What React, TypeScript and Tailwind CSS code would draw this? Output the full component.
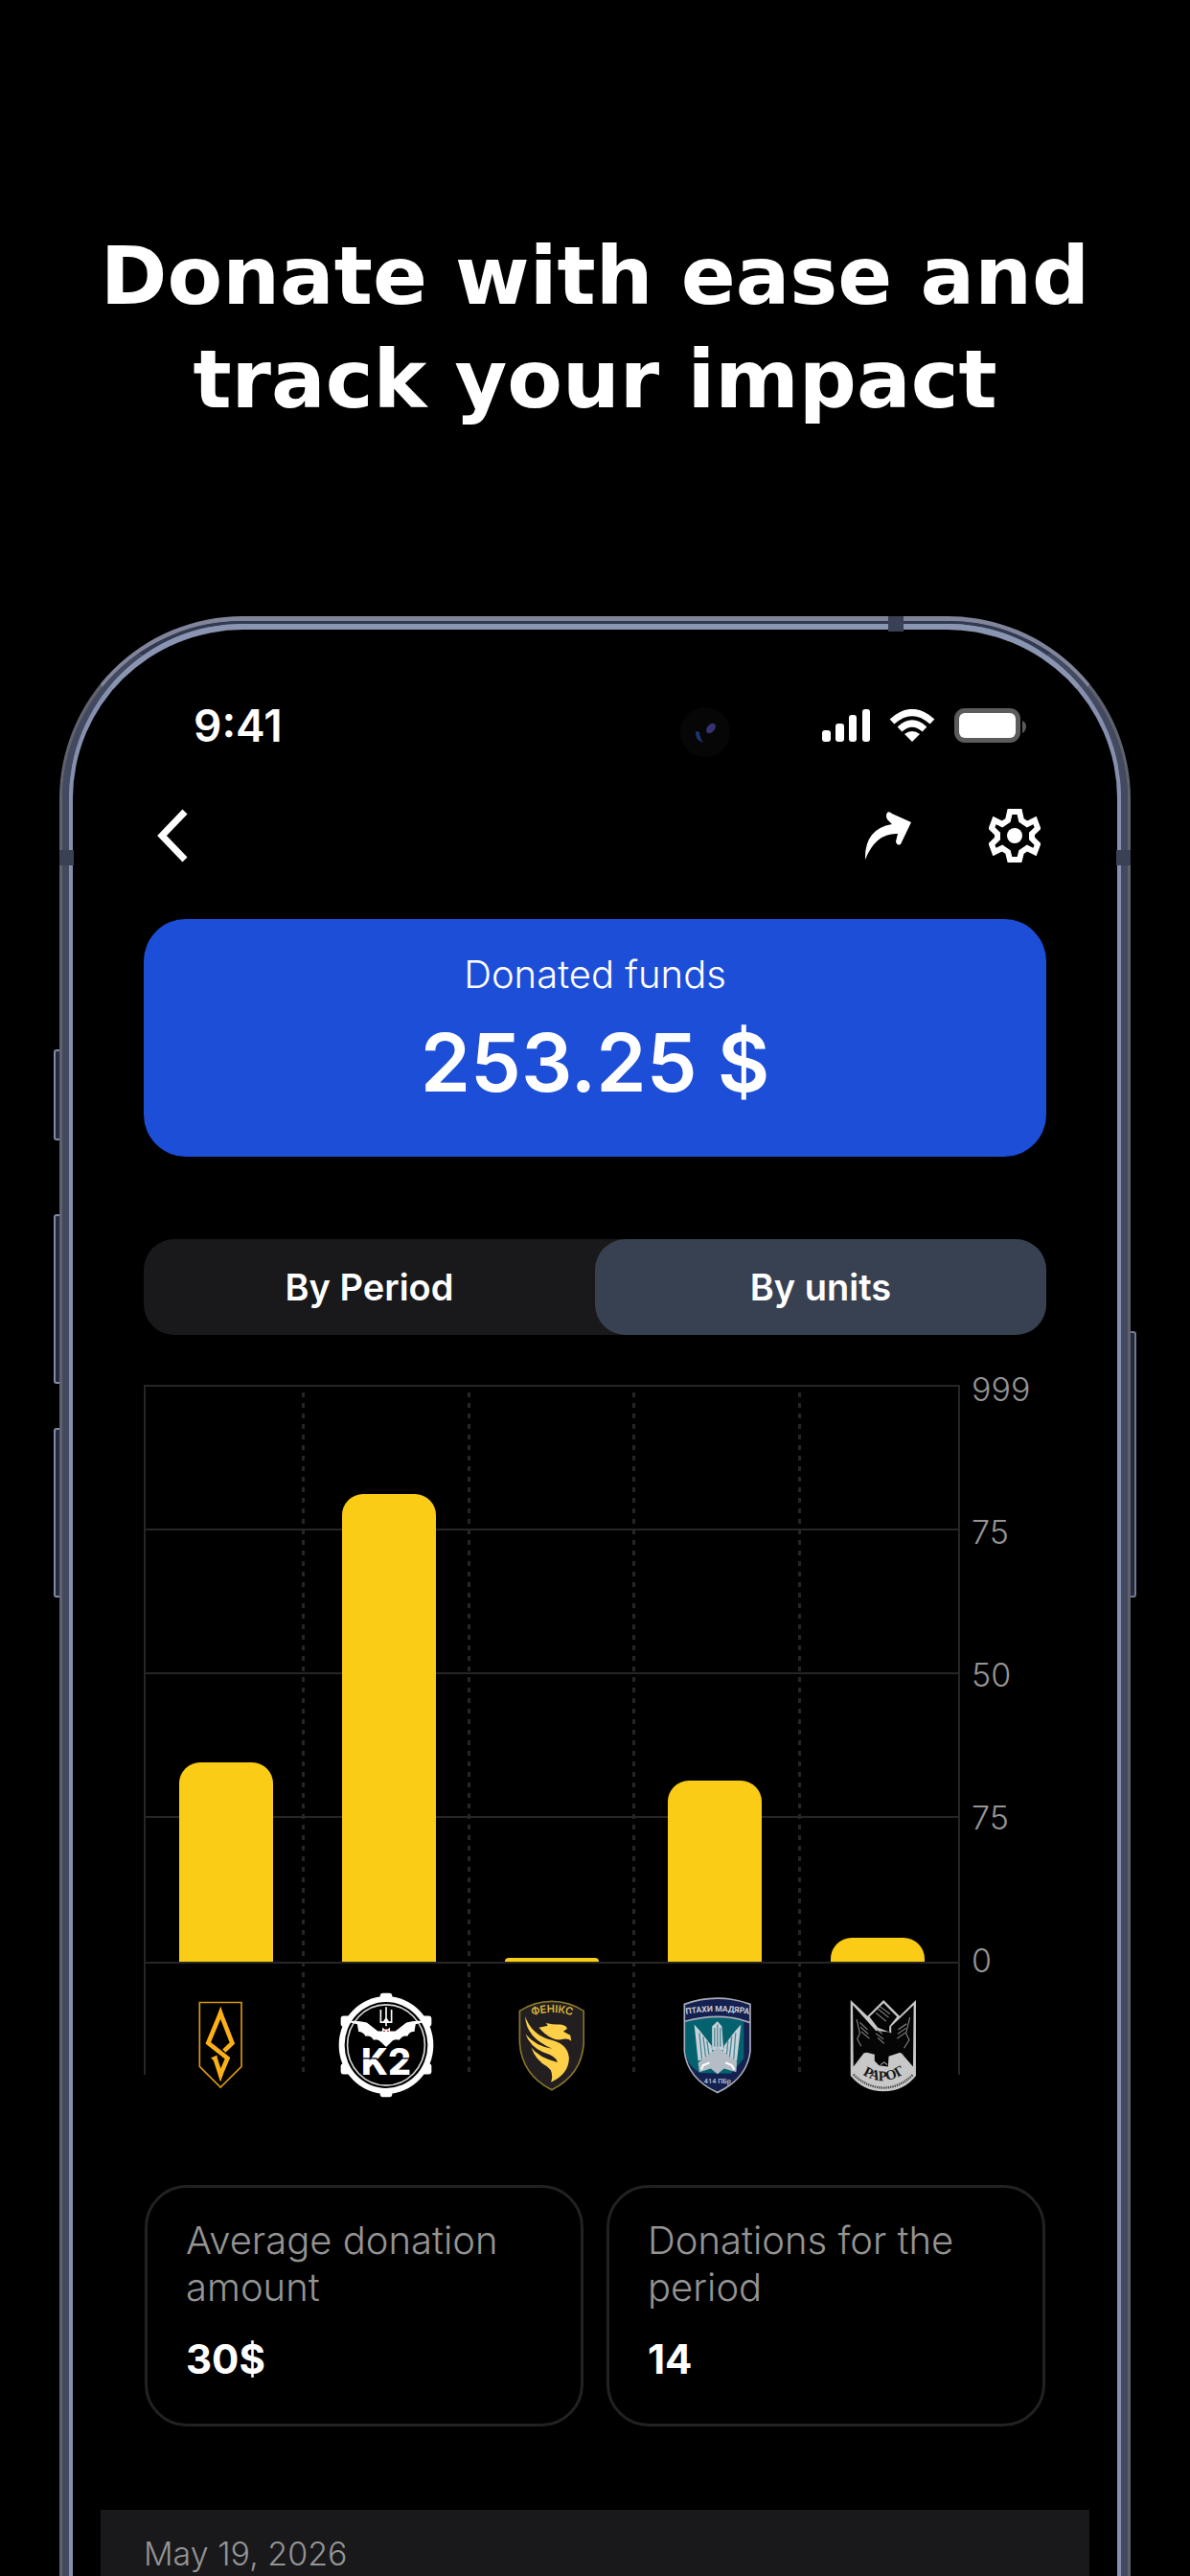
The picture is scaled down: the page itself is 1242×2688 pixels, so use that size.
import { useState } from "react";
import type { ReactNode } from "react";

type Tab = "period" | "units";

interface Unit {
  name: string;
  percent: number;
  logo: ReactNode;
}

const AzovLogo = () => (
  <svg viewBox="83 83 139 277" className="w-[46px] h-[92px]" fill="none" stroke="#fcb017">
    <path d="M87 87H219V289L153 355L87 289Z" strokeWidth="5" stroke="#d9960f" />
    <path
      d="M164 240L190 215L153 121L114 215L175 263L153 315L136 264"
      strokeWidth="14"
    />
    <path d="M153 99L162 128H144ZM153 338L145 312H161ZM122 262L142 253L144 280Z" fill="#fcb017" stroke="none" />
  </svg>
);

const K2Logo = () => (
  <svg viewBox="520 58 302 332" className="w-[100px] h-[110px]">
    <g fill="#fff">
      <rect x="652" y="60" width="38" height="30" rx="9" />
      <rect x="652" y="358" width="38" height="30" rx="9" />
      <rect x="528" y="132" width="32" height="34" rx="9" />
      <rect x="782" y="132" width="32" height="34" rx="9" />
      <rect x="528" y="282" width="32" height="34" rx="9" />
      <rect x="782" y="282" width="32" height="34" rx="9" />
      <ellipse cx="671" cy="224" rx="149" ry="154" />
    </g>
    <ellipse cx="671" cy="224" rx="131" ry="136" fill="#000" />
    <ellipse cx="671" cy="224" rx="122" ry="127" fill="none" stroke="#d8d8d8" strokeWidth="5" />
    <path
      d="M654 112V152H688V112M671 104V164M663 152L671 140L679 152"
      fill="none"
      stroke="#fff"
      strokeWidth="5"
    />
    <path
      d="M546 150Q575 144 610 153L645 180L659 180L659 168L666 174H676L683 168V180L700 180L735 153Q765 144 797 150L764 158L760 182Q745 180 738 196Q724 192 712 208Q694 204 686 216L671 230L656 216Q646 204 632 208Q622 192 606 196Q598 182 584 182L580 158Z"
      fill="#fff"
    />
    <path d="M662 180h6M674 180h6" stroke="#e0343c" strokeWidth="4" />
    <text
      x="671"
      y="317"
      textAnchor="middle"
      className="font-[Inter] font-extrabold"
      fontSize="114"
      fill="#fff"
    >
      K2
    </text>
    <path d="M590 266H640L656 282H688L704 266H752" fill="none" stroke="#000" strokeWidth="4" />
  </svg>
);

const PhoenixLogo = () => (
  <svg viewBox="186 82 206 284" className="w-[69px] h-[95px]">
    <path
      d="M190 116Q236 86 290 86Q344 86 390 116V215Q384 315 290 362Q196 315 190 215Z"
      fill="#231f20"
      stroke="#87752a"
      strokeWidth="5"
    />
    <path id="phoenix-arc" d="M216 134Q290 108 366 134" fill="none" />
    <text className="font-[Inter] font-semibold" fontSize="33" fill="#d8b53c">
      <textPath href="#phoenix-arc" startOffset="50%" textAnchor="middle">
        ФЕНІКС
      </textPath>
    </text>
    <g fill="#fdd048">
      <path d="M250 168L278 162L272 154Q300 160 318 158Q338 162 338 172L326 180L348 192L351 210Q340 200 326 204Q306 210 290 200Q270 192 250 168Z" />
      <path d="M207 133Q226 186 278 204Q340 216 344 262Q344 312 288 338Q298 306 276 290Q240 270 226 230Q250 262 308 276Q306 258 262 244Q222 226 208 188Q240 226 292 234Q210 200 207 133Z" />
    </g>
  </svg>
);

const BirdsLogo = () => (
  <svg viewBox="99 70 214 304" className="w-[71px] h-[101px]">
    <path
      d="M103 92Q154 73 207 73Q260 73 310 92V240Q300 325 207 370Q112 325 103 240Z"
      fill="#14204f"
    />
    <path d="M105 146Q160 130 207 132Q260 132 290 146V262L250 310L150 308Q108 280 105 236Z" fill="#04626f" />
    <path
      d="M103 92Q154 73 207 73Q260 73 310 92V240Q300 325 207 370Q112 325 103 240ZM104 146Q160 131 207 131Q260 131 310 150"
      fill="none"
      stroke="#a9acb8"
      strokeWidth="5"
    />
    <path id="birds-arc" d="M106 124Q207 106 308 124" fill="none" />
    <text className="font-[Roboto] font-bold" fontSize="26" fill="#c9cad2">
      <textPath href="#birds-arc" startOffset="50%" textAnchor="middle">
        ПТАХИ МАДЯРА
      </textPath>
    </text>
    <g fill="#c7d3da">
      <path d="M207 146L221 162L226 236H190V162Z" />
      <path d="M134 156L152 176L188 222L192 256L146 270Z" />
      <path d="M281 156L263 176L228 222L222 256L268 270Z" />
      <path d="M207 224L222 238L268 272L266 306L228 294L207 312L186 294L150 306L146 276L192 240Z" fill="#b4bcc6" />
    </g>
    <path
      d="M207 156V226M198 166V226M216 166V226M150 182L158 264M162 194L170 258M174 208L180 250M264 182L258 264M252 194L245 258M240 208L236 250"
      stroke="#4e8794"
      strokeWidth="4"
    />
    <path d="M156 298L162 284L182 276M260 298L252 284L232 276" fill="none" stroke="#fff" strokeWidth="6" />
    <text x="207" y="342" textAnchor="middle" className="font-[Roboto] font-bold" fontSize="22" fill="#a9b2c8">
      414 ПБр
    </text>
  </svg>
);

const RarogLogo = () => (
  <svg viewBox="618 80 212 296" className="w-[71px] h-[99px]">
    <path d="M623 86L676 136L726 86L776 136L827 86V322Q790 370 726 371Q662 370 623 322Z" fill="#c8c8c8" />
    <path d="M630 102L704 184L702 240L664 252L632 294Z" fill="#050505" />
    <path d="M820 102L750 168V240L782 252L818 294Z" fill="#050505" />
    <path d="M726 96L768 138L744 168V186L708 172L682 138Z" fill="#050505" />
    <path d="M690 196L704 182L744 186L760 196L782 248L742 262L740 294L712 290L698 276V256L668 248Z" fill="#050505" />
    <path
      d="M642 146L652 190L644 208L656 230M652 156L676 178M654 170L678 192M656 184L682 206M808 140L796 190L806 210L790 236M798 160L772 178M796 174L770 192M794 188L768 206M706 112L742 140M712 104L746 130M702 126L734 152M704 176L722 192M702 190L726 208M708 204L728 222"
      fill="none"
      stroke="#8f8f8f"
      strokeWidth="3"
    />
    <path d="M716 288L728 280L738 288" fill="none" stroke="#aaa" strokeWidth="3" />
    <path id="rarog-arc" d="M636 300Q726 378 818 294" fill="none" />
    <text className="font-['Liberation_Serif'] font-bold" fontSize="44" fill="#161616">
      <textPath href="#rarog-arc" startOffset="50%" textAnchor="middle">
        РАРОГ
      </textPath>
    </text>
    <path d="M632 318Q672 358 726 360Q780 358 818 318" fill="none" stroke="#444" strokeWidth="7" strokeDasharray="4 3" />
  </svg>
);

const units: Unit[] = [
  { name: "Azov", percent: 34.6, logo: <AzovLogo /> },
  { name: "K-2", percent: 81, logo: <K2Logo /> },
  { name: "Phoenix", percent: 0.6, logo: <PhoenixLogo /> },
  { name: "Birds of Magyar", percent: 31.4, logo: <BirdsLogo /> },
  { name: "Rarog", percent: 4.2, logo: <RarogLogo /> },
];

const axisLabels = ["999", "75", "50", "75", "0"];

const stats = [
  { label: "Average donation amount", value: "30$" },
  { label: "Donations for the period", value: "14" },
];

const StatusBar = () => (
  <div className="relative flex items-center justify-between h-14 pl-[52px] pr-5">
    <span className="text-[46px] leading-[56px] font-semibold">9:41</span>
    {/* front camera */}
    <div className="absolute left-[560px] top-[9px] w-[52px] h-[52px] rounded-full bg-[#060606]">
      <svg viewBox="0 0 52 52" className="w-full h-full">
        <ellipse cx="32" cy="22" rx="4" ry="6" fill="#35326f" transform="rotate(40 32 22)" />
        <path d="M16 25Q15 34 24 37Q20 31 20 26Z" fill="#1c3672" />
      </svg>
    </div>
    <div className="flex items-center gap-[20px]">
      <svg viewBox="0 0 50 34" className="w-[50px] h-[34px]" fill="#fff">
        <rect x="0" y="22" width="9" height="12" rx="3" />
        <rect x="14" y="15" width="9" height="19" rx="3" />
        <rect x="28" y="6" width="8" height="28" rx="3" />
        <rect x="42" y="0" width="8" height="34" rx="3" />
      </svg>
      <svg viewBox="0 0 48 34" className="w-12 h-[34px]">
        <path d="M3 13Q24 -6 45 13" fill="none" stroke="#fff" strokeWidth="7" />
        <path d="M11 21Q24 9 37 21" fill="none" stroke="#fff" strokeWidth="7" />
        <path d="M16 26Q24 20 32 26L24 34Z" fill="#fff" />
      </svg>
      <svg viewBox="0 0 76 36" className="w-[76px] h-9">
        <rect x="0" y="0" width="69" height="36" rx="11" fill="#5c5c5c" />
        <rect x="5" y="5" width="59" height="26" rx="6" fill="#fff" />
        <path d="M71 13Q75 15 75 19Q75 24 71 26Z" fill="#5c5c5c" />
      </svg>
    </div>
  </div>
);

const NavBar = () => (
  <nav className="flex items-center justify-between h-14 mt-[59px] pl-3 pr-1.5">
    <button aria-label="Back">
      <svg viewBox="0 0 34 56" className="w-[34px] h-14" fill="none" stroke="#fff" strokeWidth="7">
        <path d="M31 3L7 28L31 53" />
      </svg>
    </button>
    <div className="flex items-center gap-20">
      <button aria-label="Share">
        <svg viewBox="0 0 50 50" className="w-[50px] h-[50px]" fill="#fff">
          <path d="M24 1Q26 -1 29 2L49 11L38 34Q34 36 33 31L35 23Q12 22 1 50Q0 18 29 13L24 8Q22 4 24 1Z" />
        </svg>
      </button>
      <button aria-label="Settings">
        <svg viewBox="0 0 54 56" className="w-[54px] h-14" fill="none" stroke="#fff" strokeWidth="6">
          <path d="M22 3H32L34 12L40 16L48 12L51 20L45 26V31L51 37L48 45L40 41L34 45L32 53H22L20 45L14 41L6 45L3 37L9 31V26L3 20L6 12L14 16L20 12Z" />
          <circle cx="27" cy="28" r="8" fill="#fff" stroke="none" />
        </svg>
      </button>
    </div>
  </nav>
);

const UnitsChart = () => (
  <section className="flex mt-10">
    <div className="relative w-[852px] mt-3">
      {/* grid rows */}
      <div className="h-[604px] border-2 border-[#262626] grid grid-rows-4">
        <div className="border-b-2 border-[#262626]"></div>
        <div className="border-b-2 border-[#262626]"></div>
        <div className="border-b-2 border-[#262626]"></div>
        <div></div>
      </div>
      <div className="h-[116px] border-x-2 border-[#262626] flex items-center">
        <div className="grid grid-cols-5 flex-1 -mx-2 pt-[54px]">
          {units.map((unit) => (
            <div
              key={unit.name}
              role="img"
              aria-label={unit.name}
              className="h-[110px] flex items-center justify-center"
            >
              {unit.logo}
            </div>
          ))}
        </div>
      </div>

      {/* dashed column separators */}
      <div className="absolute inset-x-0 top-2 bottom-0 grid grid-cols-[168fr_173fr_173fr_173fr_166fr]">
        {units.map((unit, i) => (
          <div key={unit.name} className="flex justify-end">
            {i < units.length - 1 && (
              <div className="w-[3px] bg-[repeating-linear-gradient(to_bottom,#262626_0_5px,transparent_5px_11px)]"></div>
            )}
          </div>
        ))}
      </div>

      {/* bars */}
      <div className="absolute inset-x-0 top-0 h-[602px] px-[37px] flex items-end justify-between">
        {units.map((unit) => (
          <div
            key={unit.name}
            className="w-[98px] rounded-t-[22px] bg-[#facc15]"
            style={{ height: `${unit.percent}%` }}
          ></div>
        ))}
      </div>
    </div>

    <div className="flex flex-col justify-between h-[630px] pl-3 text-[34px] leading-[34px] font-light text-[#949494]">
      {axisLabels.map((label, i) => (
        <span key={i}>{label}</span>
      ))}
    </div>
  </section>
);

const App = () => {
  const [tab, setTab] = useState<Tab>("units");

  const tabClass = (value: Tab) =>
    `flex-1 rounded-[32px] text-[38px] leading-[100px] font-semibold ${
      tab === value ? "bg-[#374151]" : ""
    }`;

  return (
    <div className="min-h-screen flex flex-col bg-black text-white font-[Inter,sans-serif] overflow-hidden">
      <h1 className="mt-[234px] mb-[193px] mx-auto w-[1140px] max-w-full text-center text-[84px] leading-[108px] font-bold font-['DejaVu_Sans',sans-serif]">
        Donate with ease and track your impact
      </h1>

      <div className="relative flex-1 flex flex-col mx-[62px]">
        {/* side buttons of the phone */}
        <div className="absolute -left-1.5 top-[452px] w-2 h-[95px] rounded-l-[3px] border-2 border-[#7f8aa6] bg-[#262b3b]"></div>
        <div className="absolute -left-1.5 top-[624px] w-2 h-[177px] rounded-l-[3px] border-2 border-[#7f8aa6] bg-[#262b3b]"></div>
        <div className="absolute -left-1.5 top-[847px] w-2 h-[177px] rounded-l-[3px] border-2 border-[#7f8aa6] bg-[#262b3b]"></div>
        <div className="absolute -right-1.5 top-[746px] w-2 h-[278px] rounded-r-[3px] border-2 border-[#6f7a94] bg-[#262b3b]"></div>

        {/* metal frame, three layers */}
        <div className="relative flex-1 flex flex-col rounded-t-[191px] border-x-[3px] border-t-[5px] border-x-[#5f616d] border-t-[#80859a] bg-[#3d4459]">
          <div className="flex-1 flex flex-col rounded-t-[187px] border-x-[7px] border-t-[3px] border-x-[#434a5f] border-t-[#333950] bg-[#8d98b5]">
            <div className="flex-1 flex flex-col rounded-t-[182px] border-x-[4px] border-t-[6px] border-x-[#8490ae] border-t-[#8a95b2] bg-black px-[29px]">
              <div className="px-[45px] pt-[72px]">
                <StatusBar />
                <NavBar />

                <section className="mt-[59px] h-[248px] rounded-[44px] bg-[#1d4ed8] text-center pt-[34px]">
                  <p className="text-[40px] leading-[48px] font-light">Donated funds</p>
                  <p className="text-[84px] leading-[88px] mt-6 font-semibold">253.25 $</p>
                </section>

                <div className="mt-[86px] flex rounded-[32px] bg-[#19191b]">
                  <button className={tabClass("period")} onClick={() => setTab("period")}>
                    By Period
                  </button>
                  <button className={tabClass("units")} onClick={() => setTab("units")}>
                    By units
                  </button>
                </div>

                <UnitsChart />

                <div className="grid grid-cols-2 gap-6 mt-[115px] px-px">
                  {stats.map((stat) => (
                    <section
                      key={stat.label}
                      className="h-[252px] rounded-[44px] border-[3px] border-[#222] px-[40px] pt-[30px]"
                    >
                      <h2 className="text-[40px] leading-[49px] font-light text-[#949494]">{stat.label}</h2>
                      <p className="text-[42px] leading-[50px] mt-[26px] font-bold">{stat.value}</p>
                    </section>
                  ))}
                </div>
              </div>

              <div className="flex-1 mt-[87px] px-[45px] pt-6 bg-[#19191b] text-[34px] leading-[44px] font-light text-[#949494]">
                May 19, 2026
              </div>
            </div>
          </div>

          {/* antenna bands */}
          <div className="absolute -top-[5px] right-[234px] w-4 h-4 bg-[#3b4155]"></div>
          <div className="absolute top-[239px] -left-[3px] w-[15px] h-4 bg-[#3b4155]"></div>
          <div className="absolute top-[239px] -right-[3px] w-[15px] h-4 bg-[#3b4155]"></div>
        </div>
      </div>
    </div>
  );
};

export default App;
